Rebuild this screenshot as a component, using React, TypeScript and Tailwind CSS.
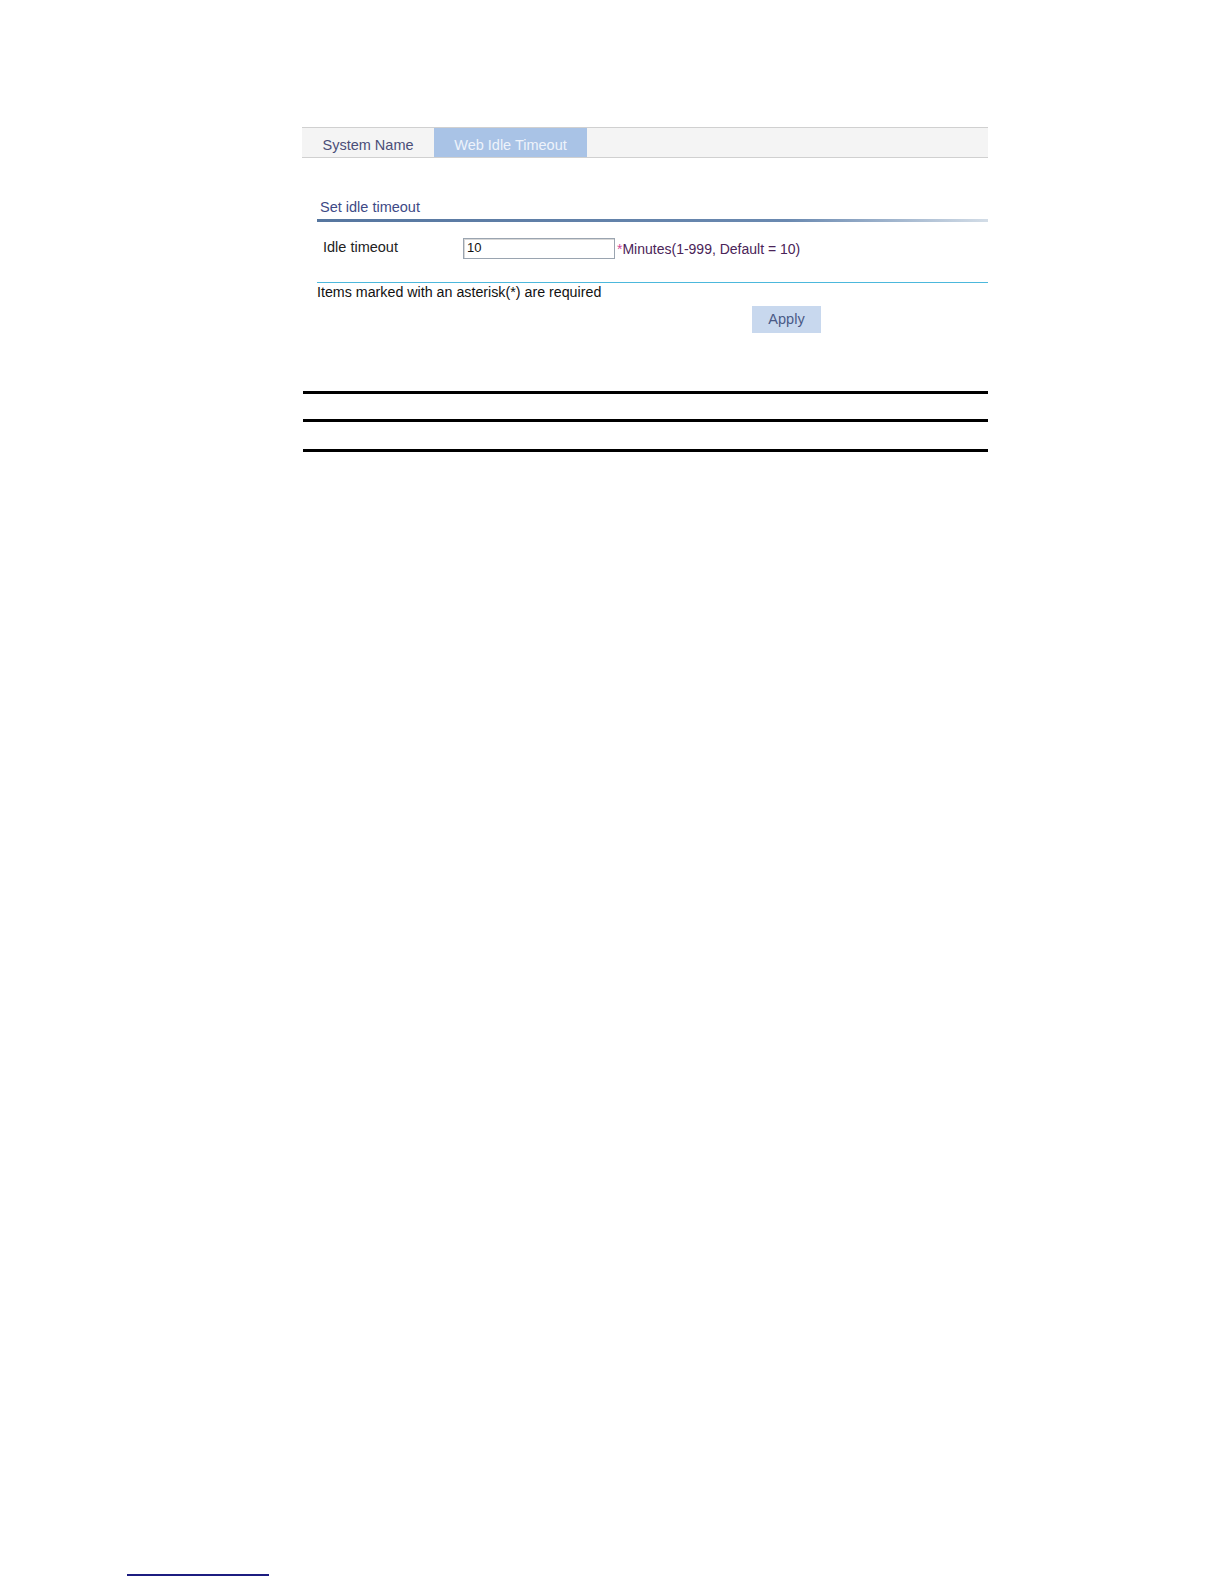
import React from "react";

export default function App() {
  return (
    <div
      className="relative w-[1224px] h-[1584px] bg-white"
      style={{ fontFamily: '"Liberation Sans", Arial, sans-serif' }}
    >
      <div className="pt-[127px] ml-[302px] w-[686px]">
        {/* Tab bar */}
        <div className="flex h-[31px] bg-[#f4f4f4] border-t border-b border-[#d0d0d0]">
          <div className="w-[132px] flex items-center justify-center text-[14.5px] text-[#4a4e78] pt-[7px]">
            System Name
          </div>
          <div className="w-[153px] flex items-center justify-center text-[14.5px] text-[#eef3fb] bg-[#a9c3e6] pt-[7px]">
            Web Idle Timeout
          </div>
        </div>

        {/* Section */}
        <div className="ml-[15px] mt-[41px]">
          <div className="pl-[3px] text-[14.5px] text-[#3e4a86] leading-[16px]">
            Set idle timeout
          </div>
          <div className="mt-[4px] h-[3px] bg-gradient-to-r from-[#56769f] via-[#6a89b0] via-70% to-[#d3dde7]" />

          <div className="flex items-center pt-[14px] pb-[22px]">
            <div className="w-[146px] pl-[6px] text-[14.5px] text-[#222]">Idle timeout</div>
            <div className="w-[152px] h-[21px] border border-[#9aa4b0] bg-white flex items-center pl-[3px] text-[13px] text-[#111] shadow-[inset_1px_1px_0_#d8d8d8]">
              10
            </div>
            <div className="ml-[2px] text-[14px] text-[#4a2458] pt-[3px]">
              <span className="text-[#d04a9a]">*</span>Minutes(1-999, Default = 10)
            </div>
          </div>
          <div className="h-px bg-[#4cb8dc]" />
          <div className="text-[14.25px] text-[#111] leading-[18px]">
            Items marked with an asterisk(*) are required
          </div>
          <div className="mt-[5px] pl-[435px]">
            <div className="w-[69px] h-[27px] bg-[#c8d8ee] flex items-center justify-center text-[14.5px] text-[#4a5a86]">
              Apply
            </div>
          </div>
        </div>

        {/* Black rules */}
        <div className="ml-[1px] mt-[58px]">
          <div className="h-[3px] bg-black" />
          <div className="h-[3px] bg-black mt-[25px]" />
          <div className="h-[3px] bg-black mt-[27px]" />
        </div>
      </div>

      <div className="absolute left-[127px] top-[1574px] w-[142px] h-[2px] bg-[#1c1c80]" />
    </div>
  );
}
